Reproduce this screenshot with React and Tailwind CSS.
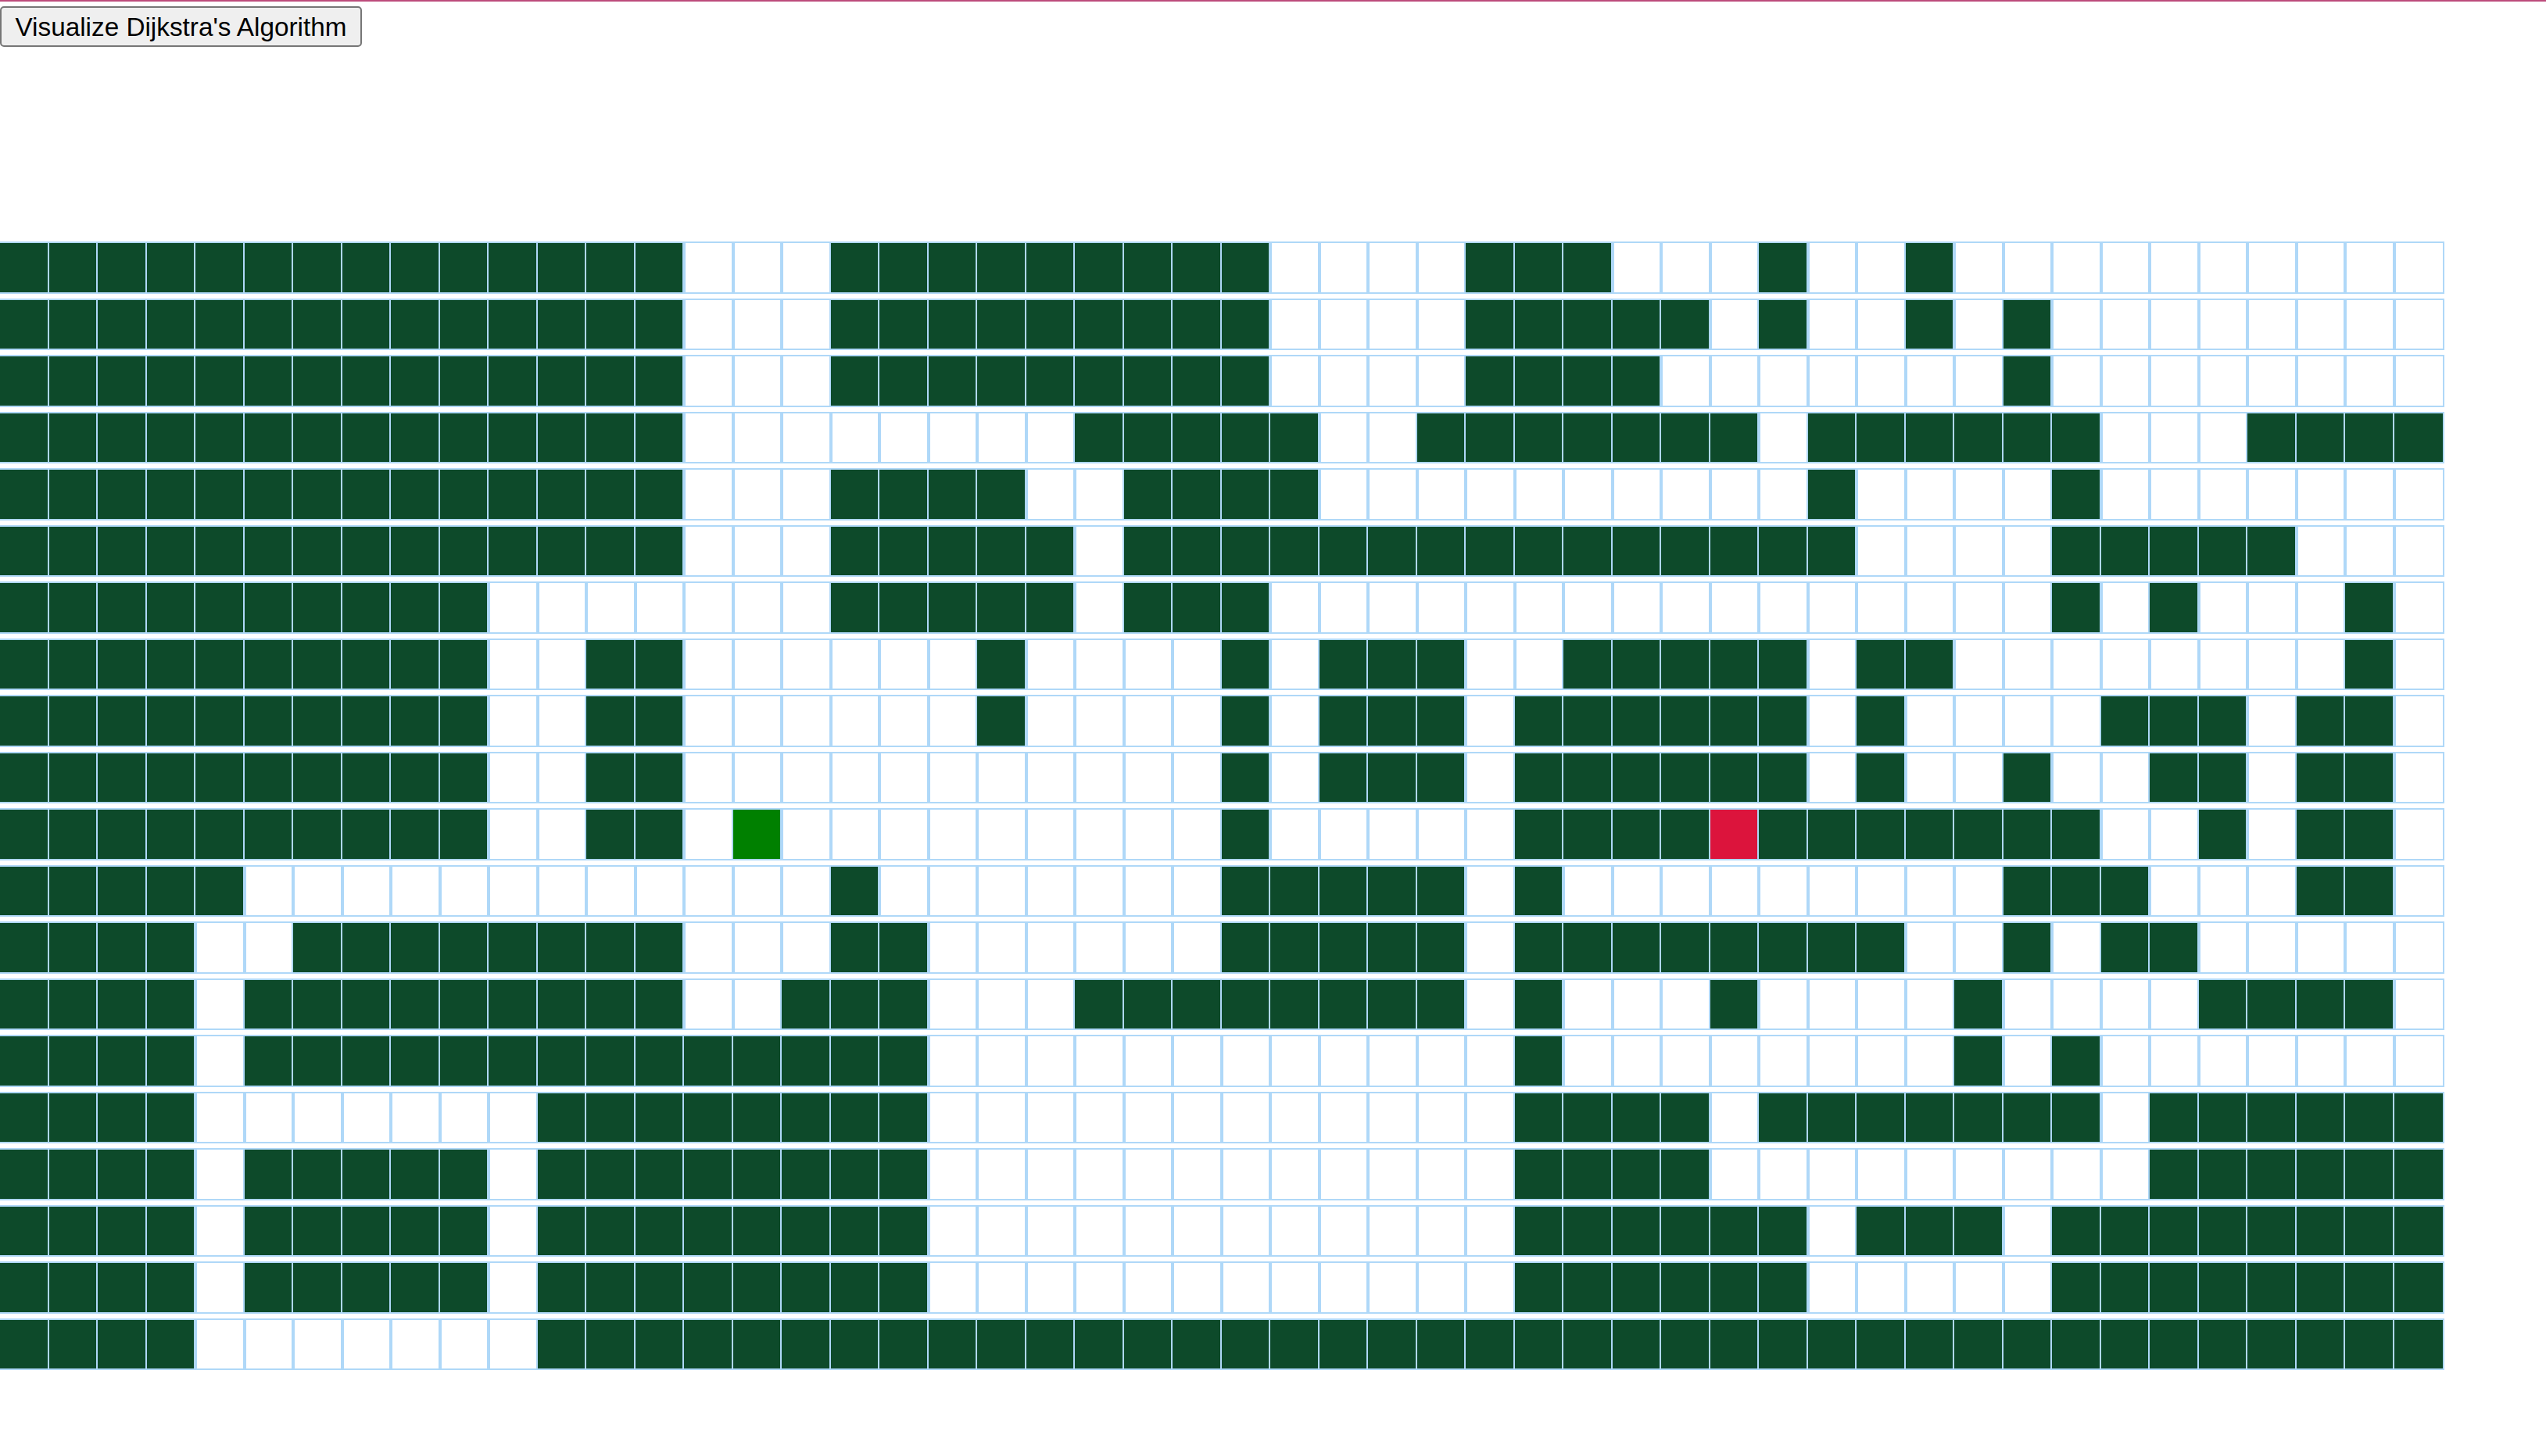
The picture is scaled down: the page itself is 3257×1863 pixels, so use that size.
import { useState } from 'react'

// each row is a run-length list: wall, empty, wall, empty ...
const ROWS = [
  [14, 3, 9, 4, 3, 3, 1, 2, 1, 10],
  [14, 3, 9, 4, 5, 1, 1, 2, 1, 1, 1, 8],
  [14, 3, 9, 4, 4, 7, 1, 8],
  [14, 8, 5, 2, 7, 1, 6, 3, 4],
  [14, 3, 4, 2, 4, 10, 1, 4, 1, 7],
  [14, 3, 5, 1, 15, 4, 5, 3],
  [10, 7, 5, 1, 3, 16, 1, 1, 1, 3, 1, 1],
  [10, 2, 2, 6, 1, 4, 1, 1, 3, 2, 5, 1, 2, 8, 1, 1],
  [10, 2, 2, 6, 1, 4, 1, 1, 3, 1, 6, 1, 1, 4, 3, 1, 2, 1],
  [10, 2, 2, 11, 1, 1, 3, 1, 6, 1, 1, 2, 1, 2, 2, 1, 2, 1],
  [10, 2, 2, 11, 1, 5, 12, 2, 1, 1, 2, 1],
  [5, 12, 1, 7, 5, 1, 1, 9, 3, 3, 2, 1],
  [4, 2, 8, 3, 2, 6, 5, 1, 8, 2, 1, 1, 2, 5],
  [4, 1, 9, 2, 3, 3, 8, 1, 1, 3, 1, 4, 1, 4, 4, 1],
  [4, 1, 14, 12, 1, 8, 1, 1, 1, 7],
  [4, 7, 8, 12, 4, 1, 7, 1, 6],
  [4, 1, 5, 1, 8, 12, 4, 9, 6],
  [4, 1, 5, 1, 8, 12, 6, 1, 3, 1, 8],
  [4, 1, 5, 1, 8, 12, 6, 5, 8],
  [4, 7, 39],
]

const START = { row: 10, col: 15 }
const FINISH = { row: 10, col: 35 }

const buildGrid = () =>
  ROWS.map((runs, row) => {
    const nodes = []
    runs.forEach((len, i) => {
      for (let k = 0; k < len; k++) {
        const col = nodes.length
        nodes.push({
          row,
          col,
          isWall: i % 2 === 0,
          isStart: row === START.row && col === START.col,
          isFinish: row === FINISH.row && col === FINISH.col,
        })
      }
    })
    return nodes
  })

const Node = ({ node }) => {
  let color = ''
  if (node.isStart) color = 'bg-[#008000]'
  else if (node.isFinish) color = 'bg-[#dc143c]'
  else if (node.isWall) color = 'bg-[#0d4a2a]'

  return (
    <div
      className={`w-[62.5px] h-[62.5px] shrink-0 outline-solid outline-[2.5px] outline-[#afd8f8] ${color}`}
    />
  )
}

export default function App() {
  const [grid] = useState(buildGrid)

  return (
    <div className="min-h-screen bg-white">
      <div className="h-[2px] bg-[#bd4b7b]" />
      <button className="mt-[6px] w-[463px] h-[52px] bg-[#efefef] border-2 border-[#767676] rounded-[5px] text-[33.3px] text-black font-['Liberation_Sans',Arial,sans-serif]">
        Visualize Dijkstra's Algorithm
      </button>

      {/* Grid */}
      <div className="mt-[251px] flex flex-col gap-[10px]">
        {grid.map((row, r) => (
          <div key={r} className="flex">
            {row.map(node => (
              <Node key={node.col} node={node} />
            ))}
          </div>
        ))}
      </div>
    </div>
  )
}
